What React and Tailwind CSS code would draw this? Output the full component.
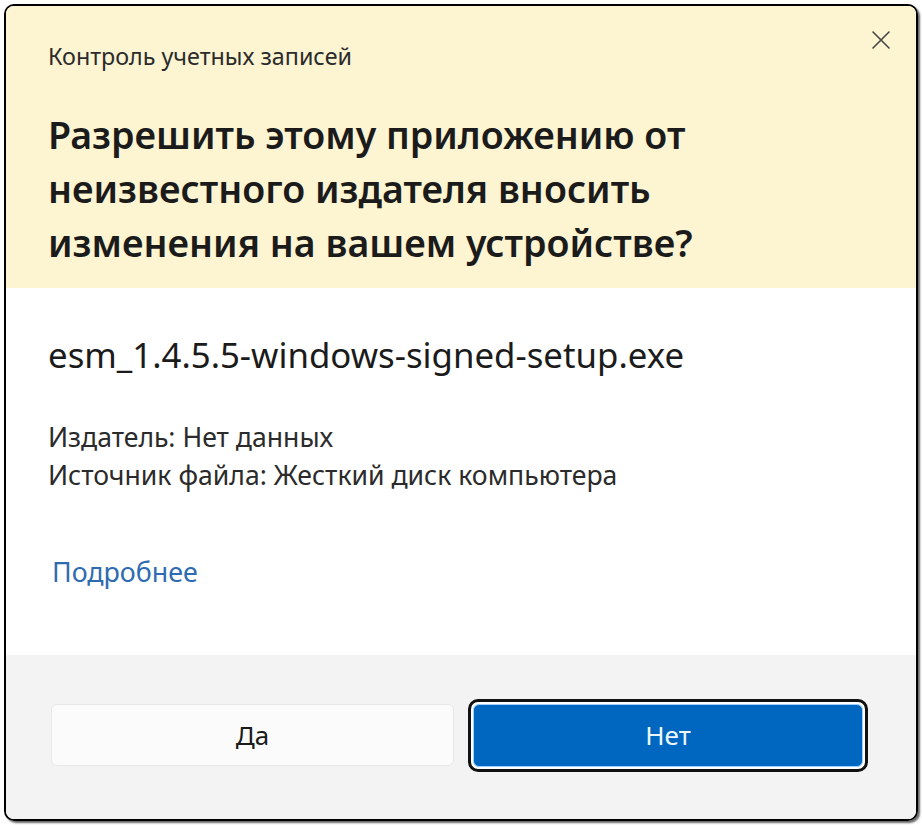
export default function App() {
  return (
    <div className="w-[922px] h-[825px] bg-white pt-[4px] pl-[4px]" style={{ fontFamily: '"Noto Sans", "Open Sans", sans-serif' }}>
      <div className="relative w-[914px] h-[817px] flex flex-col border-2 border-black rounded-[10px] overflow-hidden shadow-[2px_2px_2px_rgba(0,0,0,0.6)]">
        <div className="h-[282px] shrink-0 bg-[#fdf4d2] pl-[42px] pt-[35px]">
          <div className="text-[23.3px] leading-[30px] text-[#2b2b2b]">Контроль учетных записей</div>
          <h1 className="mt-[37px] text-[37.6px] leading-[54px] font-semibold text-[#1b1b1b]">
            Разрешить этому приложению от<br />неизвестного издателя вносить<br />изменения на вашем устройстве?
          </h1>
          <button className="absolute top-[22px] right-[23px] w-[24px] h-[24px] flex items-center justify-center text-[#444]">
            <svg width="20" height="20" viewBox="0 0 20 20" fill="none" stroke="currentColor" strokeWidth="1.6" strokeLinecap="round">
              <path d="M2 2 L18 18 M18 2 L2 18" />
            </svg>
          </button>
        </div>
        <div className="h-[367px] shrink-0 bg-white pl-[42px] pt-[45px]">
          <div className="text-[34.8px] leading-[44px] text-[#1b1b1b]">esm_1.4.5.5-windows-signed-setup.exe</div>
          <div className="mt-[41px] text-[26.6px] leading-[38px] text-[#2b2b2b]">
            <div>Издатель: Нет данных</div>
            <div>Источник файла: Жесткий диск компьютера</div>
          </div>
          <div className="mt-[60px] ml-[4px] text-[26.8px] leading-[36px] text-[#2f6bb0]">Подробнее</div>
        </div>
        <div className="flex-1 bg-[#f3f3f3] flex items-center gap-[14px] pl-[45px] pb-[4px]">
          <button className="w-[403px] h-[62px] rounded-[6px] bg-[#fbfbfb] border border-[#e8e8e8] text-[26px] text-[#1b1b1b]">Да</button>
          <div className="w-[400px] p-[2px] rounded-[10px] border-[3px] border-[#111] bg-white">
            <button className="w-full h-[63px] rounded-[6px] bg-[#0067c0] border border-[#9fd0ff] text-[26px] text-[#eef7ff]">Нет</button>
          </div>
        </div>
      </div>
    </div>
  );
}
